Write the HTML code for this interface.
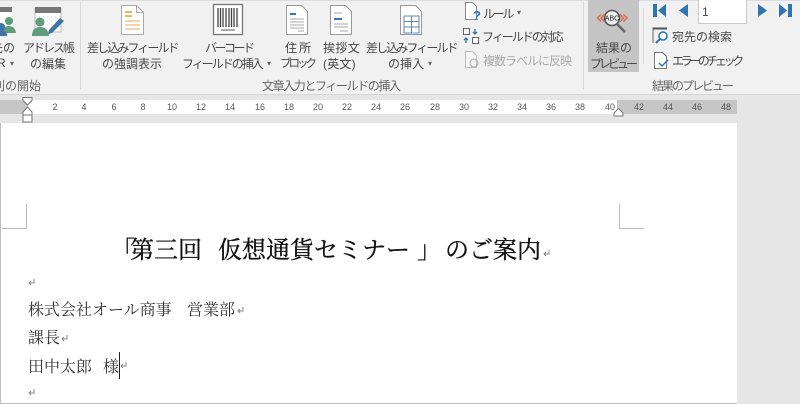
<!DOCTYPE html>
<html><head><meta charset="utf-8">
<style>
html,body{margin:0;padding:0}
body{width:800px;height:404px;overflow:hidden;background:#e6e6e6;position:relative;font-family:"Liberation Sans","Noto Sans CJK JP",sans-serif;filter:blur(.3px)}
.t{position:absolute;white-space:nowrap;font-size:12px;line-height:14px;color:#484848}
.g{position:absolute;font-size:12px;line-height:14px;color:#666;white-space:nowrap}
.r{position:absolute;top:102px;width:20px;text-align:center;font-size:9px;line-height:11px;color:#555}
.d{position:absolute;font-family:"Liberation Serif","Noto Serif CJK SC","Noto Sans CJK JP",serif;white-space:nowrap;color:#333;font-size:16px;line-height:22px}
.h{font-size:24px;line-height:34px;color:#111;top:234px;-webkit-text-stroke:.35px #111}
.s{position:absolute;background:#d8d8d8;width:1px}
svg{position:absolute;overflow:visible}
.a{position:absolute;color:#666;font-size:8px;line-height:8px}
</style></head><body>
<div style="position:absolute;left:0;top:0;width:800px;height:94px;background:#f1f1f1;border-bottom:1px solid #d6d6d6"></div>
<div style="position:absolute;left:0;top:0;width:800px;height:1px;background:#ddd"></div>
<div class="s" style="left:80px;top:2px;height:87px"></div>
<div class="s" style="left:583px;top:2px;height:87px"></div>
<div class="s" style="left:643px;top:8px;height:56px"></div>
<div style="position:absolute;left:588px;top:0;width:51px;height:72px;background:#c5c5c5"></div>

<!-- icons -->
<svg style="left:0;top:7px" width="16" height="30"><rect x="-6" y="0" width="18" height="5" fill="#777"/><rect x="-6" y="5" width="18" height="16" fill="#fff"/><circle cx="9" cy="14" r="4" fill="#5f9c7b"/><path d="M3 26q0-7 6-7t7 7z" fill="#5f9c7b"/><circle cx="1" cy="20" r="4" fill="#3f74a6"/><path d="M-5 29q0-6 6-6t6 6z" fill="#3f74a6"/></svg>
<svg style="left:31px;top:7px" width="34" height="30"><rect x="4" y="1" width="26" height="24" fill="#fff" stroke="#bbb"/><rect x="4" y="0" width="26" height="6" fill="#777"/><path d="M8 10h22M8 14h22M8 18h22" stroke="#ccc" stroke-dasharray="1 3"/><circle cx="9" cy="15" r="4.500" fill="#5f9c7b"/><path d="M1 29q0-9 8-9t9 9z" fill="#5f9c7b"/><path d="M18 23l11-12 4 3-12 12-4 1z" fill="#3f74a6"/></svg>
<svg style="left:121px;top:5px" width="24" height="31"><path d="M.5.500h15l7 7v22H.5z" fill="#fff" stroke="#aaa"/><path d="M15.500 .5v7h7" fill="none" stroke="#aaa"/><path d="M4 7h7M4 11h7" stroke="#eab95e" stroke-width="2"/><path d="M4 16h15M4 20h15M4 24h15" stroke="#e9a75a"/></svg>
<svg style="left:213px;top:4px" width="32" height="32"><rect x=".5" y=".5" width="29" height="30" fill="#fff" stroke="#777" stroke-width="1.300"/><path d="M5 4v19M7.500 4v19M10 4v19M13 4v19M16 4v19M18.500 4v19M21 4v19M24 4v19" stroke="#444" stroke-width="1.300"/><path d="M8 26h14" stroke="#aaa" stroke-width="2"/></svg>
<svg style="left:286px;top:5px" width="23" height="30"><path d="M.5.500h15l6 6v23H.5z" fill="#fff" stroke="#999"/><path d="M4 9h6" stroke="#3d78ad" stroke-width="2"/><path d="M4 14h14M4 17h14M4 20h14M4 23h14M12 26h6" stroke="#aaa"/></svg>
<svg style="left:330px;top:5px" width="23" height="30"><path d="M.5.500h15l6 6v23H.5z" fill="#fff" stroke="#999"/><path d="M4 14h8" stroke="#3d78ad" stroke-width="2"/><path d="M4 8h8M4 19h14M4 22h14M10 26h8" stroke="#aaa"/></svg>
<svg style="left:400px;top:5px" width="23" height="30"><path d="M.5.500h15l6 6v23H.5z" fill="#fff" stroke="#999"/><path d="M4 11h15v17H4zM4 16.500h15M4 22h15M11.500 11v17" fill="none" stroke="#5b88b5"/></svg>
<svg style="left:465px;top:2px" width="16" height="20"><path d="M.5.500h7l4 4v13H.5z" fill="#fff" stroke="#888"/><text x="8" y="18" font-size="13" font-weight="bold" fill="#2f75b0" font-family="Liberation Sans">?</text></svg>
<svg style="left:463px;top:28px" width="18" height="17"><rect x=".5" y=".5" width="6" height="6" fill="#fff" stroke="#666"/><rect x="9.500" y="9.500" width="6" height="6" fill="#fff" stroke="#666"/><path d="M12 1v5M10 4l2 2 2-2M3 15v-5M1 12l2-2 2 2" fill="none" stroke="#2f75b0" stroke-width="1.300"/></svg>
<svg style="left:465px;top:51px" width="16" height="18"><path d="M.5.500h7l4 4v12H.5z" fill="#f6f6f6" stroke="#bbb"/><circle cx="9" cy="12" r="4" fill="none" stroke="#aaa"/></svg>
<svg style="left:594px;top:10px" width="40" height="24"><circle cx="18" cy="8" r="7.500" fill="#eee" stroke="#555" stroke-width="1.600"/><path d="M23 14l8 8" stroke="#666" stroke-width="2.500"/><text x="18" y="10.500" text-anchor="middle" font-size="7" fill="#222" font-family="Liberation Sans">ABC</text><path d="M7 4.500l-3.500 3.500 3.500 3.500M10.500 4.500l-3.500 3.500 3.500 3.500M26 4.500l3.500 3.500-3.500 3.500M29.500 4.500l3.500 3.500-3.500 3.500" fill="none" stroke="#d96a4a" stroke-width="1.500"/></svg>
<svg style="left:653px;top:4px" width="140" height="14"><path d="M0 0h4v13H0zM13 0v13L5 6.500z" fill="#2f75b0"/><path d="M35 0v13l-9-6.500z" fill="#2f75b0"/><path d="M105 0v13l9-6.500z" fill="#2f75b0"/><path d="M126 0v13l8-6.500zM135 0h4v13h-4z" fill="#2f75b0"/></svg>
<div style="position:absolute;left:698px;top:0;width:49px;height:24px;background:#fff;border:1px solid #c8c8c8;border-top:0;box-sizing:border-box;font-size:12px;line-height:25px;padding-left:3px;color:#444">1</div>
<svg style="left:652px;top:27px" width="18" height="18"><path d="M1 16V1h14" fill="none" stroke="#666" stroke-width="1"/><path d="M1 1.500h14" stroke="#555" stroke-width="2"/><circle cx="11" cy="9" r="4" fill="#fff" stroke="#2f75b0" stroke-width="1.600"/><path d="M8 12l-4 4" stroke="#2f75b0" stroke-width="2"/></svg>
<svg style="left:654px;top:52px" width="16" height="18"><path d="M.5.500h8l4 4v12H.5z" fill="#fff" stroke="#777"/><path d="M5 11l3 3 6-6" fill="none" stroke="#2f75b0" stroke-width="1.500"/></svg>

<!-- labels -->
<div class="t" style="left:-9px;top:41px">先の</div>
<div class="t" style="left:-3px;top:56px">R</div>
<div class="a" style="left:10px;top:60px">▾</div>
<div class="t" style="left:23px;top:41px;letter-spacing:-2px">アドレス帳</div>
<div class="t" style="left:30px;top:57px">の編集</div>
<div class="g" style="left:-7px;top:79px">列の開始</div>
<div class="t" style="left:87px;top:41px;letter-spacing:-1.900px">差し込みフィールド</div>
<div class="t" style="left:102px;top:57px">の強調表示</div>
<div class="t" style="left:205px;top:41px;letter-spacing:-2.500px">バーコード</div>
<div class="t" style="left:182px;top:57px;letter-spacing:-2px">フィールドの挿入</div>
<div class="a" style="left:267px;top:60px">▾</div>
<div class="t" style="left:285px;top:41px;letter-spacing:2px">住所</div>
<div class="t" style="left:280px;top:57px;font-size:11.500px;letter-spacing:-3px">ブロック</div>
<div class="t" style="left:323px;top:41px;letter-spacing:.4px">挨拶文</div>
<div class="t" style="left:323px;top:57px;letter-spacing:.2px">(英文)</div>
<div class="t" style="left:366px;top:41px;letter-spacing:-1.900px">差し込みフィールド</div>
<div class="t" style="left:388px;top:57px">の挿入</div>
<div class="a" style="left:428px;top:60px">▾</div>
<div class="t" style="left:483px;top:7px;letter-spacing:-2.300px">ルール</div>
<div class="a" style="left:517px;top:9px">▾</div>
<div class="t" style="left:482px;top:30px;letter-spacing:-2px">フィールドの対応</div>
<div class="t" style="left:483px;top:54px;color:#aaa;letter-spacing:-1px">複数ラベルに反映</div>
<div class="g" style="left:262px;top:79px;letter-spacing:-1.400px">文章入力とフィールドの挿入</div>
<div class="t" style="left:596px;top:41px">結果の</div>
<div class="t" style="left:590px;top:57px;letter-spacing:-3px">プレビュー</div>
<div class="t" style="left:672px;top:30px">宛先の検索</div>
<div class="t" style="left:672px;top:54px;letter-spacing:-3.400px">エラーのチェック</div>
<div class="g" style="left:652px;top:79px;letter-spacing:-2px">結果のプレビュー</div>

<!-- ruler -->
<div style="position:absolute;left:0;top:100px;width:737px;height:14px;background:#c6c6c6"></div>
<div style="position:absolute;left:27px;top:100px;width:590px;height:14px;background:#fff"></div>
<div class="r" style="left:45px">2</div><div class="r" style="left:74px">4</div><div class="r" style="left:104px">6</div><div class="r" style="left:133px">8</div><div class="r" style="left:162px">10</div><div class="r" style="left:191px">12</div><div class="r" style="left:220px">14</div><div class="r" style="left:250px">16</div><div class="r" style="left:279px">18</div><div class="r" style="left:308px">20</div><div class="r" style="left:337px">22</div><div class="r" style="left:366px">24</div><div class="r" style="left:395px">26</div><div class="r" style="left:425px">28</div><div class="r" style="left:454px">30</div><div class="r" style="left:483px">32</div><div class="r" style="left:512px">34</div><div class="r" style="left:541px">36</div><div class="r" style="left:570px">38</div><div class="r" style="left:600px">40</div><div class="r" style="left:629px">42</div><div class="r" style="left:658px">44</div><div class="r" style="left:687px">46</div><div class="r" style="left:716px">48</div>
<svg style="left:22px;top:97px" width="12" height="27"><path d="M1 .5h9v3L5.500 8 1 3.500z" fill="#fff" stroke="#777"/><path d="M5.500 10L1 15v3h9v-3z" fill="#fff" stroke="#777"/><rect x="1" y="18" width="9" height="7" fill="#fff" stroke="#777"/></svg>
<svg style="left:613px;top:108px" width="12" height="9"><path d="M5.500 .5L1 5v3h9V5z" fill="#fff" stroke="#777"/></svg>

<!-- page -->
<div style="position:absolute;left:0;top:123px;width:736px;height:280px;background:#fff;border-left:1px solid #bdbdbd;border-bottom:1px solid #bdbdbd"></div>
<svg style="left:0;top:203px" width="800" height="26"><path d="M2 25.500h24.500V1M619.500 1v24.500H644" fill="none" stroke="#bbb"/></svg>

<div class="d h" style="left:111px">「</div>
<div class="d h" style="left:130px">第三回</div>
<div class="d h" style="left:218px">仮想通貨セミナー</div>
<div class="d h" style="left:417px">」</div>
<div class="d h" style="left:445px">のご案内</div>
<div class="d" style="left:28px;top:300px">株式会社オール商事</div>
<div class="d" style="left:187px;top:300px">営業部</div>
<div class="d" style="left:28px;top:328px">課長</div>
<div class="d" style="left:28px;top:357px">田中太郎</div>
<div class="d" style="left:103px;top:357px">様</div>
<div style="position:absolute;left:119px;top:352px;width:1px;height:27px;background:#222"></div>
<svg style="left:0;top:0;pointer-events:none" width="800" height="404"><g fill="none" stroke="#888" stroke-width="1"><path d="M34 279v4h-5M31 281l-2 2 2 2"/><path d="M549 250v4h-5M546 252l-2 2 2 2"/><path d="M243 307v4h-5M240 309l-2 2 2 2"/><path d="M67 335v4h-5M64 337l-2 2 2 2"/><path d="M126 362v4h-5M123 364l-2 2 2 2"/><path d="M34 389v4h-5M31 391l-2 2 2 2"/></g></svg>
</body></html>
